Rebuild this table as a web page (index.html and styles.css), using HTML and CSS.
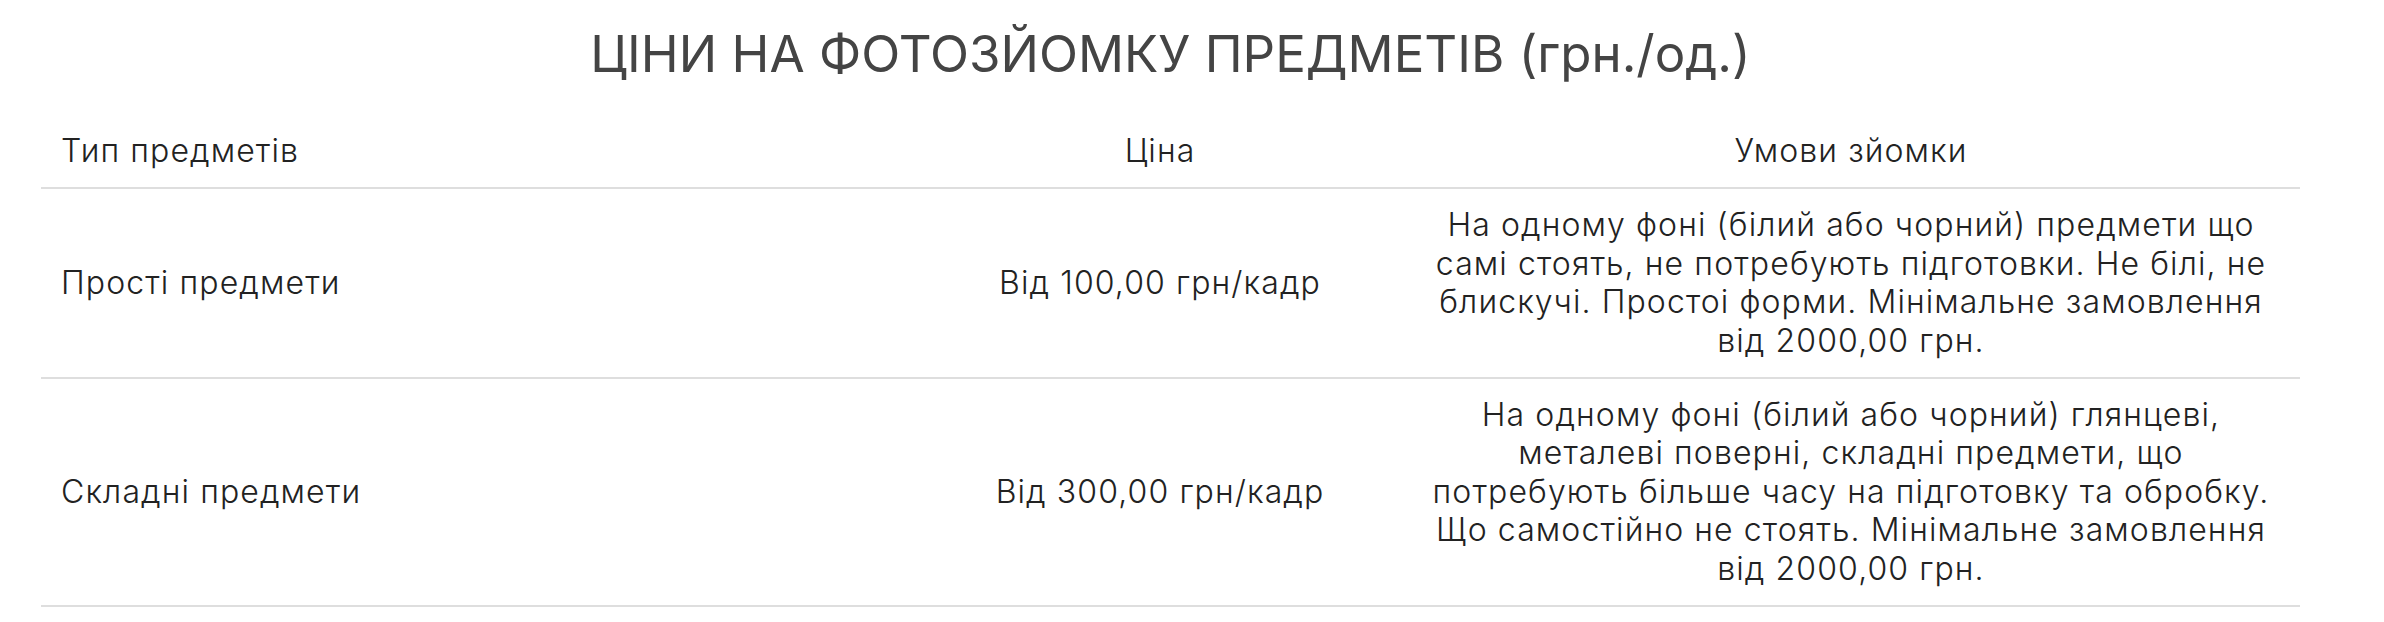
FILE: index.html
```html
<!DOCTYPE html>
<html lang="uk">
<head>
<meta charset="utf-8">
<title>Ціни на фотозйомку предметів</title>
<link rel="stylesheet" href="styles.css">
</head>
<body>
<main class="wrap">
  <h2 class="title">ЦІНИ НА ФОТОЗЙОМКУ ПРЕДМЕТІВ (грн./од.)</h2>
  <table class="prices">
    <colgroup>
      <col class="c-type">
      <col class="c-price">
      <col class="c-cond">
    </colgroup>
    <thead>
      <tr>
        <th class="left">Тип предметів</th>
        <th>Ціна</th>
        <th>Умови зйомки</th>
      </tr>
    </thead>
    <tbody>
      <tr>
        <td class="left">Прості предмети</td>
        <td>Від 100,00 грн/кадр</td>
        <td>На одному фоні (білий або чорний) предмети що самі стоять, не потребують підготовки. Не білі, не блискучі. Простоі форми. Мінімальне замовлення від 2000,00 грн.</td>
      </tr>
      <tr>
        <td class="left">Складні предмети</td>
        <td>Від 300,00 грн/кадр</td>
        <td>На одному фоні (білий або чорний) глянцеві, металеві поверні, складні предмети, що потребують більше часу на підготовку та обробку. Що самостійно не стоять. Мінімальне замовлення від 2000,00 грн.</td>
      </tr>
    </tbody>
  </table>
</main>
</body>
</html>
```
FILE: styles.css
```css
html, body {
  margin: 0;
  padding: 0;
  background: #ffffff;
}

body {
  font-family: Inter, "Noto Sans", "DejaVu Sans", sans-serif;
  color: #222222;
}

.wrap {
  width: 2259px;
  margin-left: 41px;
  padding-top: 24px;
}

.title {
  margin: 0 0 31px 0;
  font-size: 51px;
  line-height: 60px;
  font-weight: 400;
  color: #444444;
  text-align: center;
}

.prices {
  width: 2259px;
  border-collapse: collapse;
  table-layout: fixed;
}

.c-type { width: 877px; }
.c-price { width: 484px; }
.c-cond { width: 898px; }

.prices th,
.prices td {
  font-size: 32px;
  line-height: 38.4px;
  font-weight: 300;
  letter-spacing: 1.1px;
  padding: 17px 20px;
  text-align: center;
  vertical-align: middle;
  border-bottom: 2px solid #dedede;
}

.prices .left {
  text-align: left;
}
```
